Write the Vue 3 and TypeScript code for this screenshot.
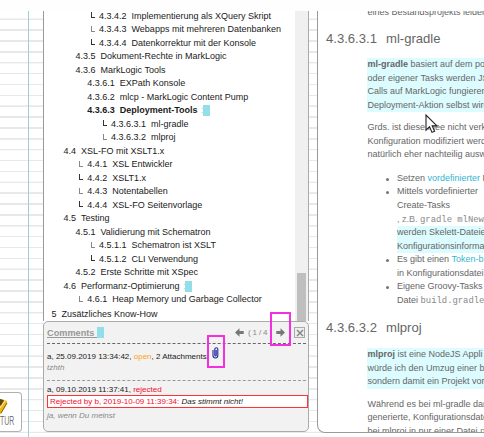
<script setup lang="ts">
interface TocEntry {
  level: string
  num: string
  title: string
  corner?: 'dark' | 'light'
  active?: boolean
  marked?: boolean
}

const toc: TocEntry[] = [
  { level: 'l4', num: '4.3.4.2', title: 'Implementierung als XQuery Skript', corner: 'dark' },
  { level: 'l4', num: '4.3.4.3', title: 'Webapps mit mehreren Datenbanken', corner: 'light' },
  { level: 'l4', num: '4.3.4.4', title: 'Datenkorrektur mit der Konsole', corner: 'dark' },
  { level: 'l2', num: '4.3.5', title: 'Dokument-Rechte in MarkLogic' },
  { level: 'l2', num: '4.3.6', title: 'MarkLogic Tools' },
  { level: 'l3', num: '4.3.6.1', title: 'EXPath Konsole' },
  { level: 'l3', num: '4.3.6.2', title: 'mlcp - MarkLogic Content Pump' },
  { level: 'l3', num: '4.3.6.3', title: 'Deployment-Tools', active: true, marked: true },
  { level: 'l5', num: '4.3.6.3.1', title: 'ml-gradle', corner: 'dark' },
  { level: 'l5', num: '4.3.6.3.2', title: 'mlproj', corner: 'light' },
  { level: 'l1', num: '4.4', title: 'XSL-FO mit XSLT1.x' },
  { level: 'l3', num: '4.4.1', title: 'XSL Entwickler', corner: 'light' },
  { level: 'l3', num: '4.4.2', title: 'XSLT1.x', corner: 'dark' },
  { level: 'l3', num: '4.4.3', title: 'Notentabellen', corner: 'light' },
  { level: 'l3', num: '4.4.4', title: 'XSL-FO Seitenvorlage', corner: 'dark' },
  { level: 'l1', num: '4.5', title: 'Testing' },
  { level: 'l2', num: '4.5.1', title: 'Validierung mit Schematron' },
  { level: 'l4', num: '4.5.1.1', title: 'Schematron ist XSLT', corner: 'light' },
  { level: 'l4', num: '4.5.1.2', title: 'CLI Verwendung', corner: 'dark' },
  { level: 'l2', num: '4.5.2', title: 'Erste Schritte mit XSpec' },
  { level: 'l1', num: '4.6', title: 'Performanz-Optimierung', marked: true },
  { level: 'l3', num: '4.6.1', title: 'Heap Memory und Garbage Collector', corner: 'light' },
  { level: 'l0', num: '5', title: 'Zusätzliches Know-How' },
]
</script>

<template>
  <div class="page">
    <div class="workspace">
      <aside class="margin">
        <div class="card">
          <svg class="card-icon" width="8" height="17" viewBox="0 0 8 17">
            <path d="M0 1 L7 3 L7 6 L1 16 L0 16 Z" fill="#f3b51c" />
            <path d="M0 1 L4 2 L2 6 L0 8 Z" fill="#5c4710" />
            <path d="M7 5 L1 15" stroke="#7a5a08" stroke-width="0.9" fill="none" />
            <path d="M5 3 L0 10" stroke="#fff0b5" stroke-width="1" />
          </svg>
          <span class="card-label">TUR</span>
        </div>
      </aside>

      <section class="nav">
        <div class="toc">
          <div class="toc-list">
            <div
              v-for="item in toc"
              :key="item.num"
              class="row"
              :class="[item.level, { active: item.active }]"
            >
              <i v-if="item.corner" class="corner" :class="item.corner"></i>
              <span class="num">{{ item.num }}</span>
              <span class="title">{{ item.title }}</span>
              <template v-if="item.marked">
                <span class="colon">:</span><i class="mark"></i>
              </template>
            </div>
          </div>
          <div class="scrollbar"><div class="thumb"></div></div>
        </div>

        <div class="comments">
          <header class="bar">
            <span class="heading">Comments&nbsp;</span><i class="mark"></i>
            <div class="pager">
              <svg width="9" height="9" viewBox="0 0 9 9">
                <path d="M0 4.5 L4.5 0.3 V3 H8.7 V6 H4.5 V8.7 Z" fill="#777" />
              </svg>
              <span class="count">( 1 / 4 )</span>
              <svg width="9" height="9" viewBox="0 0 9 9">
                <path d="M9 4.5 L4.5 0.3 V3 H0.3 V6 H4.5 V8.7 Z" fill="#777" />
              </svg>
            </div>
            <button class="close" type="button">
              <svg width="8" height="8" viewBox="0 0 8 8">
                <path d="M1 1 L7 7 M7 1 L1 7" stroke="#888" stroke-width="1.5" />
              </svg>
            </button>
          </header>

          <div class="comment first">
            <div class="meta">
              <span>a, 25.09.2019 13:34:42, <span class="open">open</span>, 2 Attachments</span>
              <svg class="clip" width="7" height="12" viewBox="0 0 7 12">
                <path
                  d="M1 3 V8.5 C1 11.8 5.8 11.8 5.8 8.5 V2.3 C5.8 0.2 2.8 0.2 2.8 2.3 V8 C2.8 9.4 4.2 9.4 4.2 8 V3"
                  fill="none"
                  stroke="#25259a"
                  stroke-width="1.1"
                />
              </svg>
            </div>
            <div class="body">tzhth</div>
          </div>
          <div class="comment second">
            <div class="meta"><span>a, 09.10.2019 11:37:41, <span class="rejected">rejected</span></span></div>
            <div class="reason">
              <span class="rejected">Rejected by b, 2019-10-09 11:39:34:</span> <em>Das stimmt nicht!</em>
            </div>
            <div class="body">ja, wenn Du meinst</div>
          </div>
        </div>
      </section>

      <div class="gutter"></div>

      <main class="doc">
        <div class="text lead">eines Bestandsprojekts leider</div>
        <h2><span class="hnum">4.3.6.3.1</span>ml-gradle</h2>
        <div class="text hl">
          <div><b>ml-gradle</b> basiert auf dem po</div>
          <div>oder eigener Tasks werden JS</div>
          <div>Calls auf MarkLogic fungieren</div>
          <div>Deployment-Aktion selbst wird</div>
        </div>
        <div class="text para">
          <div>Grds. ist diese Idee nicht verk</div>
          <div>Konfiguration modifiziert werd</div>
          <div>natürlich eher nachteilig ausw</div>
        </div>
        <ul>
          <li><div>Setzen <a>vordefinierter</a> P</div></li>
          <li>
            <div>Mittels vordefinierter</div>
            <div>Create-Tasks</div>
            <div class="pale">, z.B. <code>gradle mlNew</code></div>
            <div class="mk">werden Skelett-Dateie</div>
            <div class="mk">Konfigurationsinforma</div>
          </li>
          <li>
            <div>Es gibt einen <a>Token-b</a></div>
            <div>in Konfigurationsdatei</div>
          </li>
          <li>
            <div>Eigene Groovy-Tasks</div>
            <div>Datei <code>build.gradle</code></div>
          </li>
        </ul>
        <h2 class="next"><span class="hnum">4.3.6.3.2</span>mlproj</h2>
        <div class="text hl">
          <div><b>mlproj</b> ist eine NodeJS Appli</div>
          <div>würde ich den Umzug einer b</div>
          <div>sondern damit ein Projekt vor</div>
        </div>
        <div class="text para tail">
          <div>Während es bei ml-gradle dar</div>
          <div>generierte, Konfigurationsdate</div>
          <div>bei mlproj in nur einer Datei <code>p</code></div>
        </div>
      </main>
    </div>

    <i class="ruler"></i>
    <i class="frame next-frame"></i>
    <i class="frame clip-frame"></i>
    <svg class="cursor" width="14" height="21" viewBox="0 0 14 21">
      <path
        d="M1 1 V16.2 L4.5 12.8 L7 18.4 L9.6 17.3 L7.2 11.9 H12 Z"
        fill="#fff"
        stroke="#222"
        stroke-width="1.1"
      />
    </svg>
  </div>
</template>

<style>
body {
  background: #fff;
  overflow: hidden;
}
</style>

<style scoped>
.page {
  position: relative;
  box-sizing: border-box;
  width: 484px;
  height: 437px;
  padding-top: 11px;
  overflow: hidden;
  background: #fefefe;
  font-family: 'Liberation Sans', Arial, sans-serif;
  font-size: 9px;
}
.workspace {
  display: grid;
  grid-template-columns: 43px 266px 8px 167px;
  height: 426px;
  background: repeating-linear-gradient(to bottom, #fff 0 7.4px, #e8e8e8 7.6px 8.9px, #fff 9.1px 10.87px);
}
.margin {
  padding-top: 381px;
}
.card {
  box-sizing: border-box;
  width: 22px;
  height: 40px;
  padding-top: 5px;
  border: 1px solid #b0b0b0;
  border-left: 0;
  border-radius: 0 4px 4px 0;
  background: #fff;
}
.card-icon {
  display: block;
}
.card-label {
  display: block;
  width: 24px;
  font-size: 12px;
  line-height: 13px;
  color: #777;
  transform: scaleX(0.58);
  transform-origin: left;
}
.nav {
  display: flex;
  flex-direction: column;
  height: 421px;
}
.toc {
  box-sizing: border-box;
  display: flex;
  height: 310px;
  border-left: 1px solid #999;
  border-right: 1px solid #aaa;
  background: #fff;
}
.toc-list {
  flex: 1;
  margin-top: -1.5px;
}
.row {
  display: flex;
  align-items: center;
  height: 13.5px;
  line-height: 13.5px;
  white-space: nowrap;
  color: #1a1a1a;
}
.row .num {
  margin-right: 5px;
}
.l0 {
  padding-left: 7.5px;
  height: 16px;
}
.l1 { padding-left: 19.5px; }
.l2 { padding-left: 31.5px; }
.l3 { padding-left: 43.2px; }
.l4 { padding-left: 55px; }
.l5 { padding-left: 67px; }
.active {
  font-weight: bold;
}
.corner {
  box-sizing: border-box;
  width: 4px;
  height: 6px;
  margin: -2px 4.5px 0 -8.5px;
  border-left: 1px solid #333;
  border-bottom: 1px solid #333;
}
.corner.light {
  border-color: #888;
}
.colon {
  width: 2px;
  margin-left: 3.5px;
  font-weight: normal;
  color: #a8cdd2;
}
.mark {
  width: 6.5px;
  height: 11px;
  background: #93dfe9;
}
.scrollbar {
  width: 13px;
  padding: 262px 2px 0;
  box-sizing: border-box;
  background: #f0f0f0;
}
.thumb {
  height: 48px;
  background: #bfbfbf;
}
.comments {
  box-sizing: border-box;
  height: 111px;
  border: 1px solid #aaa;
  border-radius: 5px;
  background: #f2f2f2;
  font-size: 8px;
  color: #1a1a1a;
}
.bar {
  display: flex;
  align-items: center;
  box-sizing: border-box;
  height: 22px;
  margin: 0 2px 0 3px;
  border-bottom: 1px dashed #666;
}
.heading {
  font-size: 9.2px;
  font-weight: bold;
  color: #999;
  text-decoration: underline;
}
.pager {
  display: flex;
  align-items: center;
  margin-left: auto;
}
.count {
  width: 32px;
  text-align: center;
  white-space: nowrap;
  word-spacing: -0.3px;
  color: #888;
}
.close {
  display: flex;
  align-items: center;
  justify-content: center;
  box-sizing: border-box;
  width: 11px;
  height: 11px;
  margin: 0 1px 0 9px;
  padding: 0;
  border: 1px solid #aaa;
  background: #eee;
}
.comment {
  margin: 0 0 0 3px;
}
.first {
  box-sizing: border-box;
  height: 37px;
  margin-right: 2px;
  padding-top: 6px;
  border-bottom: 1px dashed #999;
}
.second {
  padding-top: 2px;
}
.meta {
  display: flex;
  align-items: center;
  height: 12px;
  white-space: nowrap;
}
.clip {
  margin: -7px 0 0 5px;
}
.open {
  color: #ffa21c;
}
.rejected {
  color: #f01030;
}
.body {
  height: 12px;
  line-height: 12px;
  font-style: italic;
  color: #888;
}
.reason {
  box-sizing: border-box;
  height: 13px;
  padding-left: 2px;
  line-height: 11px;
  border: 1px solid #f33;
  background: #fff;
}
.second .body {
  margin-top: 2px;
}
.doc {
  box-sizing: border-box;
  height: 422px;
  padding-left: 8px;
  overflow: hidden;
  border-left: 1px solid #999;
  border-bottom: 1px solid #999;
  border-bottom-left-radius: 8px;
  background: #fff;
  white-space: nowrap;
  line-height: 13.5px;
  color: #666;
}
.text {
  margin-left: 41px;
  padding-left: 0.5px;
}
.lead {
  margin-top: -5.5px;
}
h2 {
  margin: 11.5px 0 12.5px;
  font-size: 13.1px;
  font-weight: normal;
  line-height: 15px;
}
.next {
  margin: 13px 0 13px;
}
.hl,
.mk {
  background: #dcfcff;
}
.hnum {
  margin-right: 9px;
}
.para {
  margin-top: 9px;
}
ul {
  margin: 10px 0 0;
  padding: 0 0 0 71px;
  list-style: none;
}
li {
  position: relative;
}
li::before {
  position: absolute;
  left: -11px;
  top: 6px;
  width: 3px;
  height: 3px;
  border-radius: 50%;
  background: #777;
  content: '';
}
.pale {
  height: 14px;
  line-height: 14px;
  color: #888;
}
a {
  color: #35b5cf;
}
code {
  font-family: 'Liberation Mono', monospace;
  font-size: 8.9px;
  line-height: 1;
  color: #888;
}
.ruler {
  position: absolute;
  left: 28px;
  top: 11px;
  width: 1px;
  height: 426px;
  background: #a4ccd8;
}
.frame {
  position: absolute;
  box-sizing: border-box;
  border: 2px solid #f52fe0;
}
.next-frame {
  left: 270px;
  top: 312px;
  width: 21px;
  height: 34px;
}
.clip-frame {
  left: 207px;
  top: 335px;
  width: 18px;
  height: 33px;
}
.cursor {
  position: absolute;
  left: 425px;
  top: 114px;
}
</style>
